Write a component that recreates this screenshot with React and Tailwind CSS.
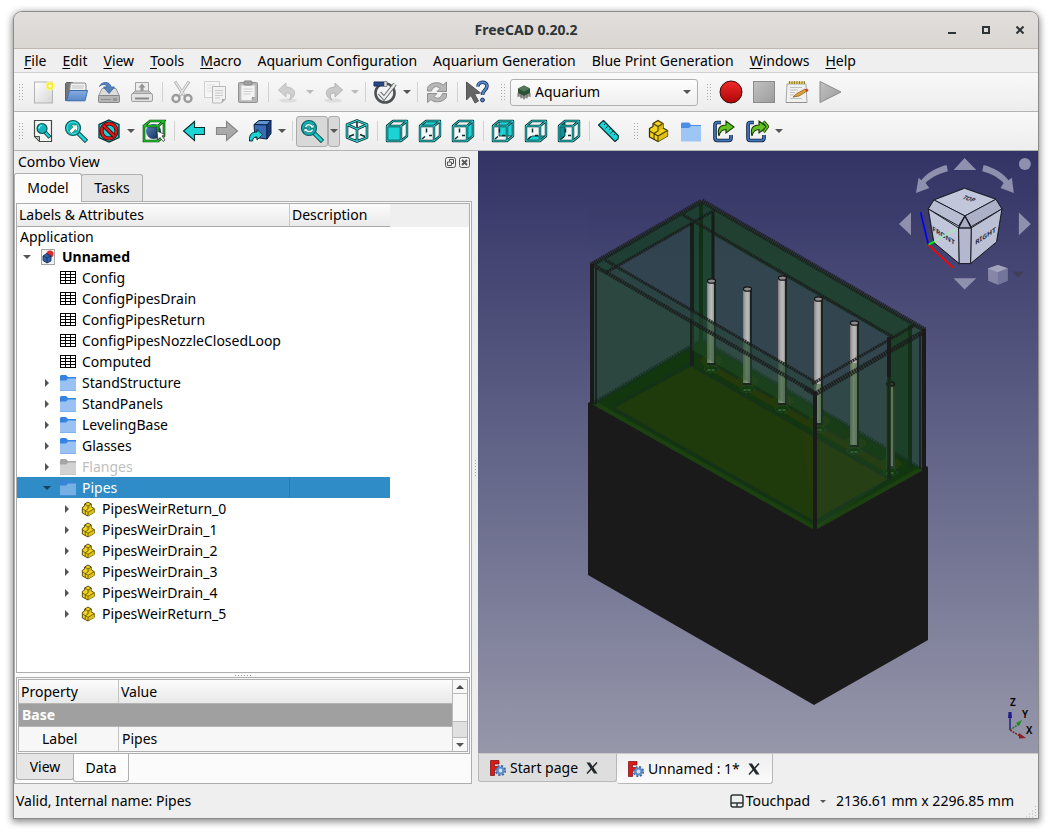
import React from "react";

const INK = "#04302f";
const TEAL = "#1cd3d6";

function Svg({ children, size = "size-6", box = "0 0 24 24", className = "" }) {
  return (
    <svg viewBox={box} className={`${size} shrink-0 ${className}`} fill="none" aria-hidden="true">
      {children}
    </svg>
  );
}

/* ---------- toolbar icons ---------- */

const NewDoc = () => (
  <Svg>
    <rect x="3.5" y="2" width="18" height="21" fill="url(#paper)" stroke="#b4b4b4" />
    <circle cx="19" cy="6" r="5" fill="#fbf6a0" opacity="0.8" />
    <circle cx="19" cy="6" r="3.4" fill="#f7ee2b" />
    <circle cx="19" cy="6" r="1.6" fill="#fffde0" />
  </Svg>
);

const OpenDoc = () => (
  <Svg>
    <path d="M1.500 20.500V3.500l1-1h6l1.500 2h2v15z" fill="#777" stroke="#5e5e5e" />
    <path d="M5 14 6.500 3h14.500l1 1v9z" fill="#f1f1f1" stroke="#888" />
    <path d="M8 6h12M7.500 8h12" stroke="#c4c4c4" />
    <path d="M2.500 20.800 5.500 10.500h18L21 20.800z" fill="url(#blueFolder)" stroke="#3a6cae" />
  </Svg>
);

const SaveDoc = () => (
  <Svg>
    <path d="M1.500 16 5 8.500h14l3.500 7.500z" fill="#dcdcdc" stroke="#999" />
    <rect x="1.500" y="15.500" width="21" height="7" rx="1" fill="#b5b5b5" stroke="#878787" />
    <path d="M4 19.500h10" stroke="#8e8e8e" />
    <path d="M17 18v3M19 18v3" stroke="#777" />
    <path d="M2.500 6.500C4 1.500 13 .5 14 7h3.500L12 13.500 6.500 7H10C9.500 4 5.500 3.500 2.500 6.500z" fill="#5382bd" stroke="#36609b" strokeWidth="0.800" />
  </Svg>
);

const Print = () => (
  <Svg>
    <path d="M5.500 13V2.500h13V13z" fill="#ececec" stroke="#a2a2a2" />
    <path d="M12 3.500 8.500 7.500h2V11h3V7.500h2z" fill="#949494" />
    <path d="M2 14 5 11h14l3 3z" fill="#c5c5c5" stroke="#9c9c9c" />
    <rect x="1.500" y="13.500" width="21" height="8" rx="1.500" fill="#e3e3e3" stroke="#a0a0a0" />
    <path d="M5 18.500h14" stroke="#888" strokeWidth="2" />
  </Svg>
);

const Cut = () => (
  <Svg>
    <path d="M5 1.500 14.500 16M19 1.500 9.500 16" stroke="#b5b5b5" strokeWidth="3" />
    <path d="M5.500 2 14 15M18.500 2 10 15" stroke="#ececec" strokeWidth="1.200" />
    <circle cx="6" cy="18.500" r="3.500" stroke="#9b9b9b" strokeWidth="2.400" />
    <circle cx="18" cy="18.500" r="3.500" stroke="#9b9b9b" strokeWidth="2.400" />
  </Svg>
);

const Copy = () => (
  <Svg>
    <path d="M1.500 1.500h15v16h-15z" fill="#f6f6f6" stroke="#cfcfcf" />
    <path d="M4 5h8M4 8h6M4 11h5" stroke="#ddd" />
    <path d="M9.500 6.500h13V19l-4 4h-9z" fill="#f1f1f1" stroke="#b8b8b8" />
    <path d="M12 10.500h8M12 13h8M12 15.500h8M12 18h5" stroke="#ccc" />
    <path d="m18.500 23 .5-4 3.500 0z" fill="#aaa" />
  </Svg>
);

const Paste = () => (
  <Svg>
    <rect x="2.500" y="2.500" width="19" height="20" rx="1" fill="#b6b6b6" stroke="#929292" />
    <path d="M5 5h14v12l-3.500 3.500H5z" fill="#f3f3f3" stroke="#c7c7c7" />
    <path d="M7.500 9h9M7.500 11.500h9M7.500 14h7" stroke="#cfcfcf" />
    <rect x="8" y="1" width="8" height="4" rx="1" fill="#a3a3a3" stroke="#838383" />
    <path d="m15.500 20.500.5-3.500h3z" fill="#999" />
  </Svg>
);

const Undo = () => (
  <Svg>
    <ellipse cx="12" cy="20.500" rx="9" ry="2" fill="#dedede" />
    <path d="M10 3 2.500 10l7.500 7v-4c5-.5 6 3 3 7 7-3 9-12-3-13z" fill="#cfcfcf" stroke="#bdbdbd" />
  </Svg>
);

const Redo = () => (
  <Svg>
    <ellipse cx="12" cy="20.500" rx="9" ry="2" fill="#dedede" />
    <path d="m14 3 7.500 7-7.500 7v-4c-5-.5-6 3-3 7-7-3-9-12 3-13z" fill="#c9c9c9" stroke="#b2b2b2" />
  </Svg>
);

const Validate = () => (
  <Svg>
    <circle cx="12" cy="13" r="9.500" fill="#f4f4f4" stroke="#4e5153" strokeWidth="2.600" />
    <path d="m6.500 13 4.500 5L22 4" stroke="#6a6d6f" strokeWidth="4.200" />
    <path d="m6.500 13 4.500 5L22 4" stroke="#ececec" strokeWidth="2.200" />
    <path d="M1 2h10v4H1z" fill="#274a86" stroke="#142c58" />
    <path d="M11 1.500h3v5h-3z" fill="#ddd" stroke="#555" strokeWidth="0.600" />
  </Svg>
);

const Refresh = () => (
  <Svg>
    <path d="M2.500 11V8.500C3 3 14 .5 18 5l3.500-3v9.500h-9.500l3-3C12 5.500 8 6 6.500 11z" fill="#b7b7b7" stroke="#8f8f8f" />
    <path d="M21.500 13.500V16c-.5 5.500-11.500 8-15.500 3.500L2.500 22.500V13.500H12l-3 3c3 3 7 2 8.500-3z" fill="#b7b7b7" stroke="#8f8f8f" />
  </Svg>
);

const WhatsThis = () => (
  <Svg>
    <path d="M1.500 2v18l4.500-4.500 4 7.500 3.500-2-4-7 6-1z" fill="#646464" stroke="#565656" />
    <path d="M13 6.500c0-5.500 9-5.500 9-.5 0 4-4.500 4-4.500 9" stroke="#17305e" strokeWidth="3.600" />
    <path d="M13 6.500c0-5.500 9-5.500 9-.5 0 4-4.500 4-4.500 9" stroke="#5787c8" strokeWidth="2" />
    <circle cx="17.500" cy="20" r="1.900" fill="#5787c8" stroke="#17305e" />
  </Svg>
);

const Record = () => (
  <Svg>
    <circle cx="12" cy="12" r="11" fill="url(#red)" stroke="#3b0a0a" />
  </Svg>
);

const Stop = () => (
  <Svg>
    <rect x="1.500" y="1.500" width="21" height="21" fill="url(#gray)" stroke="#8b8b8b" />
  </Svg>
);

const MacroEdit = () => (
  <Svg>
    <path d="M2 4h19l1 18.500H1z" fill="#f0f0f0" stroke="#a7a7a7" />
    <path d="M3.500 1.500h16.500v2.500H3.500z" fill="#d8c468" />
    <path d="M4.500 1v3M7 1v3M9.500 1v3M12 1v3M14.500 1v3M17 1v3M19.500 1v3" stroke="#8c7a2c" strokeWidth="0.900" />
    <path d="M5 7.500h12M5 10h8M5 12.500h5M5 15h4M5 18.500h12" stroke="#c1c1c1" />
    <path d="m8 17 4-3.500L20 9l2 2-8 5z" fill="#e0a33a" stroke="#8b5a14" strokeWidth="0.800" />
    <path d="m20 9.500 2-1 1.500 2-1.500 1.500z" fill="#d33" />
    <path d="M1 22.500h21" stroke="#909090" />
  </Svg>
);

const Play = () => (
  <Svg>
    <path d="M2 1.500 23 12 2 22.500z" fill="url(#gray)" stroke="#8b8b8b" />
  </Svg>
);

const FitAll = () => (
  <Svg>
    <path d="M3.500 1.500h17v21h-12l-5-5z" fill="#f5f6f4" stroke="#444b44" strokeWidth="1.200" />
    <path d="M3.500 17.500h5v5z" fill="#b9bdb7" stroke="#444b44" />
    <path d="m14 13 5 5.500" stroke={INK} strokeWidth="4" />
    <path d="m14 13 4.500 5" stroke={TEAL} strokeWidth="2.400" />
    <circle cx="11" cy="9.500" r="5" fill="#12b6bb" stroke="#0b5a5c" strokeWidth="1.200" />
    <path d="M8 9.500a3 3 0 0 1 3-3" stroke="#8ff" strokeWidth="1.200" />
  </Svg>
);

const FitSelection = () => (
  <Svg>
    <path d="m14 14 8.500 8.500" stroke={INK} strokeWidth="4.500" />
    <path d="m14 14 8 8" stroke={TEAL} strokeWidth="2.800" />
    <circle cx="9" cy="9" r="7.500" fill="#10b3b8" stroke="#0b5a5c" strokeWidth="1.200" />
    <circle cx="9" cy="9" r="6" stroke="#4de4e6" />
    <path d="m5 12 4-4-2-2h6.500v6.500l-2-2-4 4z" fill="#fff" stroke="#173" strokeWidth="0.600" />
  </Svg>
);

const DrawStyle = () => (
  <Svg>
    <path d="M12 1 22 5.500v13L12 23 2 18.500v-13z" fill={TEAL} stroke={INK} strokeWidth="1.300" />
    <circle cx="12" cy="12" r="7.500" stroke="#3c0505" strokeWidth="4" />
    <circle cx="12" cy="12" r="7.500" stroke="#e01b1b" strokeWidth="2.400" />
    <path d="m6.500 6.500 11 11" stroke="#3c0505" strokeWidth="4" />
    <path d="m6.500 6.500 11 11" stroke="#e01b1b" strokeWidth="2.400" />
  </Svg>
);

const BBox = () => (
  <Svg>
    <circle cx="11.500" cy="12.500" r="7.500" fill="url(#sphere)" />
    <path d="M2 7h14v15H2zM2 7l6-5h14l-6 5M22 2v15l-6 5" stroke="#063906" strokeWidth="2.600" />
    <path d="M2 7h14v15H2zM2 7l6-5h14l-6 5M22 2v15l-6 5" stroke="#1fc32c" strokeWidth="1.300" />
    <path d="m15 12 8 3.500-3 1.500 3 4-2 1.500-3-4-2 2.500z" fill="#fff" stroke="#333" strokeWidth="0.800" />
  </Svg>
);

const ArrowLeft = () => (
  <Svg>
    <path d="M12.500 2.500 1.500 12l11 9.500v-6h10v-7h-10z" fill={TEAL} stroke={INK} strokeWidth="1.100" />
  </Svg>
);
const ArrowRight = () => (
  <Svg>
    <path d="m11.500 2.500 11 9.500-11 9.500v-6h-10v-7h10z" fill="#aaa" stroke="#858585" strokeWidth="1.100" />
  </Svg>
);

const LinkGoto = () => (
  <Svg>
    <path d="m6 5.500 5-4h12l-4 4.500z" fill="#5f92d2" stroke="#0d2145" />
    <path d="M6 5.500 19 6v14L7 18.500z" fill="#3a6cb6" stroke="#0d2145" />
    <path d="m19 6 4-4.500v13l-4 5.500z" fill="#1a3d7a" stroke="#0d2145" />
    <path d="M1.500 22C1 15 4 13 9 13v-2.500l5.500 5L9 21v-3c-3 0-4 1-4.500 4z" fill={TEAL} stroke={INK} />
  </Svg>
);

const ZoomSync = () => (
  <Svg>
    <path d="m14 14 8.500 8.500" stroke={INK} strokeWidth="4.500" />
    <path d="m14 14 8 8" stroke={TEAL} strokeWidth="2.800" />
    <circle cx="9" cy="9" r="7.500" fill="#10b3b8" stroke="#0b5a5c" strokeWidth="1.200" />
    <path d="M4.500 8.500c0-4 6-5 8-2l1.500-1.500v4H10l1-1c-2-2-4-1-4.500.5zM13.500 10c0 4-6 5-8 2L4 13.500v-4h4l-1 1c2 2 4 1 4.500-.5z" fill="#dff" stroke={INK} strokeWidth="0.500" />
  </Svg>
);

const ISO_EDGES = "M12 1.500 22 5.500v13l-10 4-10-4v-13zM2 5.500l10 4.500 10-4.500M12 10v12.500";
const Iso = () => (
  <Svg>
    <path d="M12 1.500 22 5.500v13l-10 4-10-4v-13z" fill="#f3f6f6" />
    <path d="M12 3v5M4 17.500l5-2M20 17.500l-5-2" stroke={INK} strokeWidth="1.600" />
    <path d={ISO_EDGES} stroke={INK} strokeWidth="2.600" strokeLinejoin="round" />
    <path d={ISO_EDGES} stroke="#35dcde" strokeWidth="1.100" strokeLinejoin="round" />
  </Svg>
);

const FACE = {
  front: "M2 7h14v15H2z",
  top: "M2 7 8 2h14l-6 5z",
  right: "M16 7l6-5v15l-6 5z",
  rear: "M8 2h14v15H8z",
  bottom: "M2 22 8 17h14l-6 5z",
  left: "M2 7l6-5v15l-6 5z",
};
const CUBE = "M2 7h14v15H2zM2 7l6-5h14l-6 5M22 2v15l-6 5";

const ViewCube = ({ face }) => (
  <Svg>
    <path d="M2 7 8 2h14v15l-6 5H2z" fill="#f3f6f6" />
    <path d={FACE[face]} fill={face === "left" ? "#128e92" : TEAL} stroke={INK} strokeWidth="0.800" />
    {face !== "front" && <path d="M8.500 9.500v4M11 16.500h3M4 20l3-2.500" stroke={INK} strokeWidth="1.500" />}
    <path d={CUBE} stroke={INK} strokeWidth="2.400" strokeLinejoin="round" />
    <path d={CUBE} stroke="#35dcde" strokeWidth="1" strokeLinejoin="round" />
  </Svg>
);

const Ruler = () => (
  <Svg>
    <path d="M1.500 6 6.500 1.500l15 15.500-.5 3-3 2.500z" fill={TEAL} stroke={INK} strokeWidth="1.100" strokeLinejoin="round" />
    <path d="m9 4-2 2M11.500 6.500l-3 3M14 9l-2 2M16.500 11.500l-3 3M19 14l-2 2" stroke={INK} />
  </Svg>
);

const PartIcon = ({ size }) => (
  <Svg size={size}>
    <path d="M3.500 9.500 7 7.500V4.500l5-3 5 3v4.500l4.500 2.500V17L12 22.500 3.500 18z" fill="#f2d21c" stroke="#3a3303" strokeWidth="1.300" strokeLinejoin="round" />
    <path d="m12 7.500 5-3v4.500l-5 3.500z" fill="#d9ba14" />
    <path d="m12 17 9.500-5.500V17L12 22.500z" fill="#dfc017" />
    <path d="m7 4.500 5 3 5-3M12 7.500v4.500l-4 2.500L3.500 12M8 14.500l4 2.500 9.500-5.500M12 17v5.500M8 14.500V20" stroke="#4a4204" strokeWidth="1.100" />
  </Svg>
);

const GroupIcon = () => (
  <Svg>
    <path d="M2 22.500V4.500l1-1h7l2 2.500h10v4H2z" fill="#4a8ee6" />
    <path d="M2 22.500V9h8l2-2h10v15.500z" fill="#9ec6f4" />
  </Svg>
);

const LinkMake = ({ many }) => (
  <Svg>
    <path d="M9 3.500H5.500Q3 3.500 3 6v13q0 2.500 2.500 2.500h11q2.500 0 2.500-2.500V16" stroke="#0b1f40" strokeWidth="3.600" />
    <path d="M9 3.500H5.500Q3 3.500 3 6v13q0 2.500 2.500 2.500h11q2.500 0 2.500-2.500V16" stroke="#4374b8" strokeWidth="1.800" />
    <path d="M7 17C5 10 7.500 6 14 6V2l8 6-8 6V10.500C10 10.500 8 12 7 17z" fill="#62c221" stroke="#173a06" strokeWidth="1.100" />
    {many && <path d="m18.500 2.500 4 5-4 5.500" stroke="#173a06" strokeWidth="3.200" />}
    {many && <path d="m18.500 2.500 4 5-4 5.500" stroke="#62c221" strokeWidth="1.600" />}
  </Svg>
);

/* ---------- small icons ---------- */

const CaretDown = ({ color = "#555" }) => (
  <Svg size="h-1 w-2" box="0 0 8 4">
    <path d="M0 0h8L4 4z" fill={color} />
  </Svg>
);
const CaretUp = () => (
  <Svg size="h-1 w-2" box="0 0 8 4">
    <path d="M0 4h8L4 0z" fill="#4b4b4b" />
  </Svg>
);
const CaretRight = () => (
  <Svg size="h-2 w-1" box="0 0 4 8">
    <path d="M0 0v8l4-4z" fill="#555" />
  </Svg>
);

const SheetIcon = () => (
  <Svg size="size-4" box="0 0 16 16">
    <path d="M.5 1.500h15v12H.5zM.5 4.500h15M.5 7.500h15M.5 10.500h15M5.500 1.500v12M10.500 1.500v12" stroke="#000" shapeRendering="crispEdges" />
  </Svg>
);

const FolderIcon = ({ tone = "blue" }) => {
  const dark = tone === "gray" ? "#a6a6a6" : tone === "selected" ? "#3584d8" : "#3584e4";
  const light = tone === "gray" ? "#d2d2d2" : tone === "selected" ? "#74b0e4" : "#99c1f1";
  return (
    <Svg size="size-4" box="0 0 16 16">
      <path d="M0 15V1L1 0h5l2 2h8V15z" fill={dark} />
      <path d="M0 15.500V5.500h6l2-2h8v12z" fill={light} />
      <path d="M0 15.500h16" stroke={dark} strokeOpacity="0.500" />
    </Svg>
  );
};

const DocIcon = () => (
  <Svg size="size-4" box="0 0 16 16">
    <rect x="1.500" y="0.500" width="13" height="15" fill="#f2f2f2" stroke="#a5a5a5" />
    <circle cx="10" cy="5" r="3.500" fill="#e02a2a" />
    <path d="m3 7 3.500-2.500L11 7v5l-4 2-4-2.500z" fill="#2f5fa8" stroke="#132a52" strokeWidth="0.800" />
    <path d="m3 7 4 2 4-2M7 9v5" stroke="#132a52" strokeWidth="0.700" />
  </Svg>
);

const FreeCadIcon = () => (
  <Svg size="size-4" box="0 0 16 16">
    <path d="M.5.500h8.500v3.500H4.500v2.500h3V10h-3v5.500h-4z" fill="#dd1a1a" stroke="#6e0a0a" strokeWidth="0.700" />
    <circle cx="10.500" cy="10.500" r="4.500" stroke="#3a629c" strokeWidth="2.200" strokeDasharray="2 1.530" />
    <circle cx="10.500" cy="10.500" r="3" fill="#cfe0f5" stroke="#5f8cc8" strokeWidth="2.200" />
  </Svg>
);

const CloseX = () => (
  <Svg size="size-3" box="0 0 12 12">
    <path d="M.5.500h3.500l7.500 11H8z" fill="#22272a" />
    <path d="M11 .5 1 11.500" stroke="#22272a" strokeWidth="1.500" />
  </Svg>
);

const AquariumIcon = () => (
  <Svg size="size-4" box="0 0 16 16">
    <path d="m2 4.500 6-3 6 3v5l-6 3-6-3z" fill="#2c5136" />
    <path d="m2 4.500 6 3 6-3-6-3z" fill="#55795c" />
    <path d="m2 9 6 3 6-3v3l-6 3-6-3z" fill="#9a9c9a" />
    <path d="M2 9v4M5 10.500v4M8 12v3.500M11 10.500v4M14 9v4" stroke="#555" strokeWidth="0.800" />
  </Svg>
);

/* ---------- toolbar pieces ---------- */

const Handle = ({ className = "" }) => (
  <span className={`flex shrink-0 items-center ${className}`} aria-hidden="true">
    <svg viewBox="0 0 4 16" className="h-4 w-1">
      <path d="M.5 0v16M3.500 0v16" stroke="#aaa" strokeDasharray="1 2" shapeRendering="crispEdges" />
    </svg>
  </span>
);
const Sep = () => <span className="ml-1 mr-[2px] h-5 w-px shrink-0 bg-[#d2d2d2]" aria-hidden="true" />;

const Tool = ({ label, icon }) => (
  <button type="button" aria-label={label} className="flex h-8 w-[33px] shrink-0 items-center justify-center">
    {icon}
  </button>
);
const Drop = ({ label, color }) => (
  <button type="button" aria-label={label} className="flex h-8 w-3 shrink-0 items-center justify-center">
    <CaretDown color={color} />
  </button>
);

const Toolbar = ({ children, label }) => (
  <div role="toolbar" aria-label={label} className="flex h-[39px] shrink-0 items-center border-b border-[#b4b4b4] bg-linear-to-b from-[#f9f9f9] to-[#ededed]">
    {children}
  </div>
);

const MENUS = [
  ["F", "ile"], ["E", "dit"], ["V", "iew"], ["T", "ools"], ["M", "acro"],
  ["", "Aquarium Configuration"], ["", "Aquarium Generation"], ["", "Blue Print Generation"],
  ["W", "indows"], ["H", "elp"],
];

/* ---------- model tree ---------- */

const TREE = [
  { level: 1, label: "Config", icon: "sheet" },
  { level: 1, label: "ConfigPipesDrain", icon: "sheet" },
  { level: 1, label: "ConfigPipesReturn", icon: "sheet" },
  { level: 1, label: "ConfigPipesNozzleClosedLoop", icon: "sheet" },
  { level: 1, label: "Computed", icon: "sheet" },
  { level: 1, label: "StandStructure", icon: "folder", closed: true },
  { level: 1, label: "StandPanels", icon: "folder", closed: true },
  { level: 1, label: "LevelingBase", icon: "folder", closed: true },
  { level: 1, label: "Glasses", icon: "folder", closed: true },
  { level: 1, label: "Flanges", icon: "folder", closed: true, hidden: true },
  { level: 1, label: "Pipes", icon: "folder", open: true, selected: true },
  { level: 2, label: "PipesWeirReturn_0", icon: "part", closed: true },
  { level: 2, label: "PipesWeirDrain_1", icon: "part", closed: true },
  { level: 2, label: "PipesWeirDrain_2", icon: "part", closed: true },
  { level: 2, label: "PipesWeirDrain_3", icon: "part", closed: true },
  { level: 2, label: "PipesWeirDrain_4", icon: "part", closed: true },
  { level: 2, label: "PipesWeirReturn_5", icon: "part", closed: true },
];
const INDENT = ["pl-0", "pl-5", "pl-10"];

function TreeRow({ row }) {
  const text = row.selected ? "text-white" : row.hidden ? "text-[#bebebe]" : "text-black";
  const tone = row.selected ? "selected" : row.hidden ? "gray" : "blue";
  return (
    <tr aria-level={row.level + 1} aria-selected={!!row.selected} className={`h-[21px] ${text} ${row.selected ? "bg-[#308cc6]" : ""}`}>
      <td className={`p-0 ${row.selected ? "border-r border-[#2a7cb0]" : ""}`}>
        <div className={`flex h-[21px] items-center ${INDENT[row.level]}`}>
          <span className="mr-[3px] flex w-5 shrink-0 items-center justify-center">
            {row.closed && <CaretRight />}
            {row.open && <CaretDown color="#173f5a" />}
          </span>
          {row.icon === "sheet" && <SheetIcon />}
          {row.icon === "folder" && <FolderIcon tone={tone} />}
          {row.icon === "part" && <PartIcon size="size-4" />}
          <span className="ml-[6px] whitespace-nowrap">{row.label}</span>
        </div>
      </td>
      <td className="p-0" />
    </tr>
  );
}

function ModelTree() {
  return (
    <div className="min-h-0 flex-1 overflow-hidden border border-[#aeaeae] bg-white">
      <div className="bg-[#efefef]">
        <table role="treegrid" aria-label="Model" className="w-[373px] table-fixed border-separate border-spacing-0 bg-white">
          <colgroup>
            <col className="w-[273px]" />
            <col />
          </colgroup>
          <thead>
            <tr className="h-[23px] bg-linear-to-b from-[#fcfcfc] to-[#e9e9e9]">
              <th className="border-b border-r border-b-[#a8a8a8] border-r-[#c8c8c8] p-0 pl-[2px] text-left font-normal">Labels &amp; Attributes</th>
              <th className="border-b border-[#a8a8a8] p-0 pl-[2px] text-left font-normal">Description</th>
            </tr>
          </thead>
        </table>
      </div>
      <table role="treegrid" aria-label="Document objects" className="w-[373px] table-fixed border-separate border-spacing-0">
        <colgroup>
          <col className="w-[273px]" />
          <col />
        </colgroup>
        <tbody>
          <tr className="h-5"><td className="p-0 pl-[3px]" colSpan={2}>Application</td></tr>
          <tr className="h-5" aria-level={1}>
            <td className="p-0" colSpan={2}>
              <div className="flex h-5 items-center">
                <span className="mr-[3px] flex w-5 items-center justify-center"><CaretDown /></span>
                <DocIcon />
                <span className="ml-[6px] font-bold">Unnamed</span>
              </div>
            </td>
          </tr>
          {TREE.map((row) => <TreeRow key={row.label} row={row} />)}
        </tbody>
      </table>
    </div>
  );
}

function PropertyEditor() {
  return (
    <div className="shrink-0 border border-[#aeaeae] bg-[#f7f7f7] p-px">
      <div className="flex h-[73px] border border-[#aeaeae]">
        <table className="min-w-0 flex-1 table-fixed border-separate border-spacing-0">
          <colgroup>
            <col className="w-[100px]" />
            <col />
          </colgroup>
          <thead>
            <tr className="h-[23px] bg-linear-to-b from-[#fcfcfc] to-[#e9e9e9] text-left">
              <th className="border-r border-[#c4c4c4] p-0 pl-[2px] font-normal">Property</th>
              <th className="p-0 pl-[2px] font-normal">Value</th>
            </tr>
          </thead>
          <tbody>
            <tr className="h-6 bg-[#a0a0a0] text-white">
              <th colSpan={2} className="border-y border-[#b4b4b4] p-0 pl-[3px] text-left font-bold">Base</th>
            </tr>
            <tr className="h-6 bg-[#f7f7f7]">
              <td className="border-r border-[#c4c4c4] p-0 pl-[23px]">Label</td>
              <td className="p-0 pl-[3px]">Pipes</td>
            </tr>
          </tbody>
        </table>
        <div role="scrollbar" aria-label="Properties" aria-controls="view3d" aria-valuenow={0} className="flex w-[15px] flex-col border-l border-[#bbb] bg-[#e0e0e0]">
          <button type="button" aria-label="Scroll up" className="flex h-[14px] items-center justify-center border-b border-[#bbb] bg-[#f8f8f8]"><CaretUp /></button>
          <div className="h-7 border-b border-[#bbb] bg-[#f8f8f8]" />
          <div className="flex-1" />
          <button type="button" aria-label="Scroll down" className="flex h-[14px] items-center justify-center border-t border-[#bbb] bg-[#f8f8f8]"><CaretDown /></button>
        </div>
      </div>
    </div>
  );
}

function ComboView() {
  return (
    <aside className="flex w-[458px] shrink-0 flex-col">
      <div className="flex h-[22px] shrink-0 items-center pl-1 pr-[2px]">
        <h2 className="flex-1">Combo View</h2>
        <button type="button" aria-label="Float" className="mr-[3px]">
          <Svg size="size-[11px]" box="0 0 11 11">
            <rect x="0.500" y="0.500" width="10" height="10" rx="2" stroke="#555" />
            <path d="M2.500 5h4v3.500h-4zM4.500 4.500v-2h4v4h-2" stroke="#555" />
          </Svg>
        </button>
        <button type="button" aria-label="Close">
          <Svg size="size-[11px]" box="0 0 11 11">
            <rect x="0.500" y="0.500" width="10" height="10" rx="2" stroke="#555" />
            <path d="m3 3 5 5M8 3 3 8" stroke="#555" strokeWidth="1.800" />
          </Svg>
        </button>
      </div>
      <div role="tablist" aria-label="Combo View" className="flex h-7 shrink-0 items-end">
        <button type="button" role="tab" aria-selected="true" className="z-10 -mb-px h-[29px] w-[68px] rounded-t-[3px] border border-b-0 border-[#b0b0b0] bg-[#fcfcfc]">Model</button>
        <button type="button" role="tab" aria-selected="false" className="-ml-px h-[27px] w-[62px] rounded-t-[3px] border border-b-0 border-[#b0b0b0] bg-[#e6e6e6]">Tasks</button>
      </div>
      <div className="flex min-h-0 flex-1 flex-col border border-[#aeaeae] bg-[#fbfbfb] p-px">
        <ModelTree />
        <div className="flex h-1 shrink-0 items-center justify-center" aria-hidden="true">
          <svg viewBox="0 0 16 1" className="h-px w-4"><path d="M0 .5h16" stroke="#999" strokeDasharray="1 2" /></svg>
        </div>
        <PropertyEditor />
        <div role="tablist" aria-label="Properties" className="flex h-[28px] shrink-0 items-start">
          <button type="button" role="tab" aria-selected="false" className="h-[26px] w-[58px] rounded-b-[3px] border border-t-0 border-[#b0b0b0] bg-[#e6e6e6]">View</button>
          <button type="button" role="tab" aria-selected="true" className="-ml-px h-7 w-14 rounded-b-[3px] border border-t-0 border-[#b0b0b0] bg-[#fdfdfd]">Data</button>
        </div>
      </div>
    </aside>
  );
}

/* ---------- 3D viewport ---------- */

const PIPES = [
  { x: 707, top: 281, mid: 322, base: 365 },
  { x: 743, top: 289, mid: 342, base: 385 },
  { x: 778, top: 278, mid: 362, base: 405 },
  { x: 814, top: 299, mid: 384, base: 425 },
  { x: 850, top: 323, mid: 363, base: 447 },
  { x: 886, top: 384, mid: 384, base: 468 },
];

function Pipe({ x, top, mid, base }) {
  const thin = top === mid;
  return (
    <g>
      <ellipse cx={x + 4.500} cy={base - 4} rx="10.500" ry="5.500" fill="#1d3d0e" stroke="#3a3a0c" strokeDasharray="2 2" />
      <ellipse cx={x + 4.500} cy={base + 4} rx="7" ry="3.500" fill="#14380f" stroke="#24492a" strokeDasharray="3 1" />
      <path d={`M${x + 0.500} ${base + 5}h8`} stroke="#4f8a55" strokeDasharray="3 1" />
      <path d={`M${x} ${top}v${base - top}h9V${top}z`} fill={thin ? "#28422c" : "#1c241e"} />
      {!thin && <path d={`M${x} ${top}v${mid - top}h7V${top}z`} fill="url(#pipe)" />}
      <path d={`M${x + (thin ? 4 : 0)} ${mid}v${base - mid - 2}h${thin ? 3 : 7}V${mid}z`} fill={thin ? "#5d7758" : "url(#pipeWet)"} />
      <ellipse cx={x + 4.500} cy={top} rx="4" ry="2.200" fill={thin ? "#27402c" : "#8c8c8c"} stroke="#151515" strokeWidth="1.300" />
    </g>
  );
}

function Tank() {
  return (
    <g>
      <path d="M588 403 701 338 928 467V640L814 705 588 575z" fill="#1a1a1a" />
      <path d="M591 264 702 200 925 329 923 470 815 530 592 404z" fill="#2c4740" />
      <path d="M713 212 889 337v123L692 350V224z" fill="#33464f" />
      <path d="M692 224v98L607 271z" fill="#32444f" />
      <path d="M702 202 922 329 889 337 692 223 683 215z" fill="#214132" />
      <path d="M692 224 702 205l11 8v130l-21 23z" fill="#1f4434" />
      <path d="M592 264 702 201 713 211 605 273z" fill="#1f3f34" />
      <path d="M889 337 912 324v142l-23 13z" fill="#1d4029" />
      <path d="M912 326 921 331v137l-9 4z" fill="#2e4a47" />
      <path d="M592 404 702 340 923 470 815 530z" fill="#12370f" />
      <path d="M614 408 692 366 889 479 814 521z" fill="#1f3a0b" />
      <path d="M800 428 889 479 814 521z" fill="#243a0b" />
      <path d="m714 364 178 102-6 6L708 369z" fill="#25390b" />

      <g stroke="#163021" strokeWidth="4" opacity="0.850" strokeDasharray="2 1">
        <path d="M592 404 702 340 923 470" />
        <path d="M692 366 889 479M612 407 692 363M612 407 815 523M815 521 893 477" strokeWidth="2.500" />
        <path d="M692 352 905 474" strokeWidth="2.500" />
      </g>
      <path d="M596 404 815 528 921 469" stroke="#1c400f" strokeWidth="4" />

      <g>
        <path d="M692 223v143" stroke="#18201c" strokeWidth="4" />
        <path d="M701 204v138" stroke="#123016" strokeWidth="4" />
        <path d="M713 212v70" stroke="#171d1b" strokeWidth="3" />
        <path d="M910 325v143" stroke="#123016" strokeWidth="4" />
      </g>

      {PIPES.map((p) => <Pipe key={p.x} {...p} />)}

      <path d="M591 264 605 259 817 384 815 393z" fill="#24463a" opacity="0.550" />
      <path d="M692 322 815 393V420L692 350z" fill="#2c5236" opacity="0.350" />
      <path d="M815 393V530L889 478V350z" fill="#2c5236" opacity="0.220" />

      <g stroke="#1a1a1a" opacity="0.850">
        <path d="M591 265 702 201" strokeWidth="5" strokeDasharray="1.500 0.600" />
        <path d="M702 201 925 330" strokeWidth="5" strokeDasharray="1.500 0.600" />
        <path d="M605 273 715 210" strokeWidth="3" strokeDasharray="2 0.600" />
        <path d="M683 215 893 337" strokeWidth="3" strokeDasharray="2 0.600" />
        <path d="M605 260 817 383" strokeWidth="3" strokeDasharray="2 0.600" />
        <path d="M593 265 815 393" strokeWidth="4" strokeDasharray="2 0.600" />
        <path d="M812 384 915 325" strokeWidth="3" strokeDasharray="2 0.600" />
        <path d="M805 388 815 394 925 331" strokeWidth="5" strokeDasharray="2 0.600" />
      </g>
      <path d="M592 264V404M924 329V470" stroke="#1a1a1a" strokeWidth="4" />
      <path d="M596 268V404M920 332V469" stroke="#1a1a1a" strokeWidth="1.500" />
      <path d="M889 337v40M815 392V530" stroke="#1a1a1a" strokeWidth="4" />
      <path d="M889 377V479" stroke="#172a1a" strokeWidth="3.500" />
    </g>
  );
}

function NavCube() {
  return (
    <g transform="translate(880 145) scale(0.333)">
      <g fill="#8f90ae">
        <path d="M254 39 289 75H221zM254 434 221 400h68zM57 237l36-34v68zM453 237l-36-34v68z" />
        <circle cx="435" cy="57" r="18" />
        <path d="M200 60 204 79C170 88 147 103 137 114L148 129 108 144 116 98 124 106C142 83 170 68 200 60z" />
        <path d="M311 60 307 79C341 88 361 103 371 114L362 129 402 144 396 98 386 106C368 83 341 68 311 60z" />
      </g>
      <path d="M324 371 354 360 383 370V408L354 420 325 408z" fill="#8687a7" />
      <path d="M324 371 354 382 383 370 354 360z" fill="#a2a3bd" />
      <path d="M354 382 383 370V408L354 420z" fill="#74759a" />
      <path d="M397 381h36l-18 18z" fill="#3f3f58" />

      <g fill="#c2c6da" stroke="#1b1c26" strokeWidth="3" strokeLinejoin="round">
        <path d="M254 130 348 163 366 192 350 291 272 356H238L162 293 145 192 162 165z" />
        <path d="M162 165 254 130 348 163 255 213z" />
        <path d="M162 165 255 213 236 243 145 192z" fill="#b9bdd2" />
        <path d="M348 163 366 192 274 245 255 213z" fill="#adb1c8" />
        <path d="M145 192 236 249 238 356 162 293z" />
        <path d="M274 249 366 192 350 291 272 356z" fill="#bcc0d5" />
        <path d="M236 249H274L272 356H238z" fill="#b4b8ce" />
        <path d="M255 213 274 249H236z" fill="#a9adc5" strokeWidth="4" />
      </g>
      <g fontFamily="Noto Sans" fontWeight="700" fill="#2d2f3d" textAnchor="middle">
        <text transform="translate(191 279) skewY(33)" fontSize="20">FRONT</text>
        <text transform="translate(317 280) skewY(-33)" fontSize="20">RIGHT</text>
        <text transform="translate(262 166) rotate(18) skewX(-30)" fontSize="18">TOP</text>
      </g>
      <path d="M122 202 145 298" stroke="#0000ff" strokeWidth="5" />
      <path d="M145 300 219 368" stroke="#ff0000" strokeWidth="5" />
      <path d="m163 290 66-38" stroke="#a5e6b4" strokeWidth="5" />
      <path d="m146 299 17-9" stroke="#00f000" strokeWidth="6" />
    </g>
  );
}

function Axes() {
  return (
    <g>
      <path d="M1010 730V717" stroke="#1f1f8c" strokeWidth="1.500" />
      <path d="M1008 718l.5-6h3l.5 6z" fill="#1f1f8c" />
      <path d="m1010 730 9-6" stroke="#1f7a1f" strokeWidth="1.500" strokeDasharray="2 1" />
      <path d="m1016 723 6-3-3 6z" fill="#1f8a1f" />
      <path d="m1010 730 10 6" stroke="#7a1f1f" strokeWidth="1.500" strokeDasharray="2 1" />
      <path d="m1019 733 7 5-7 .500z" fill="#8a1f1f" />
      <g fontFamily="Noto Sans" fontSize="10" fontWeight="600" fill="#000">
        <text x="1010" y="706">Z</text>
        <text x="1022" y="718">Y</text>
        <text x="1026" y="734">X</text>
      </g>
    </g>
  );
}

function Viewport() {
  return (
    <div id="view3d" className="min-h-0 flex-1 bg-linear-to-b from-[#333365] to-[#9797aa]">
      <svg viewBox="478 151 560 602" className="size-full" fill="none" role="img" aria-label="Aquarium model">
        <Tank />
        <NavCube />
        <Axes />
      </svg>
    </div>
  );
}

/* ---------- page ---------- */

function Defs() {
  const stops = (a, b) => [<stop key="a" stopColor={a} />, <stop key="b" offset="1" stopColor={b} />];
  return (
    <svg className="absolute size-0" aria-hidden="true">
      <defs>
        <linearGradient id="paper" x1="0" y1="0" x2="1" y2="1">{stops("#ffffff", "#d6d6d6")}</linearGradient>
        <linearGradient id="blueFolder" x1="0" y1="0" x2="0" y2="1">{stops("#86aede", "#5788c9")}</linearGradient>
        <linearGradient id="red" x1="0" y1="0" x2="0" y2="1">{stops("#f02a2a", "#ad0606")}</linearGradient>
        <linearGradient id="gray" x1="0" y1="0" x2="1" y2="1">{stops("#c2c2c2", "#9c9c9c")}</linearGradient>
        <linearGradient id="sphere" x1="0" y1="0" x2="1" y2="1">{stops("#5c86c6", "#0c2450")}</linearGradient>
        <linearGradient id="pipe" x1="0" y1="0" x2="1" y2="0">
          <stop stopColor="#7d7674" />
          <stop offset="0.250" stopColor="#a5a5a5" />
          <stop offset="0.700" stopColor="#bebebe" />
          <stop offset="1" stopColor="#8c8c8c" />
        </linearGradient>
        <linearGradient id="pipeWet" x1="0" y1="0" x2="1" y2="0">
          <stop stopColor="#5c6b55" />
          <stop offset="0.500" stopColor="#7c9478" />
          <stop offset="1" stopColor="#667d63" />
        </linearGradient>
      </defs>
    </svg>
  );
}

export default function App() {
  return (
    <div className="h-screen bg-white px-[14px] pb-4 pt-3 font-['Noto_Sans',sans-serif] text-[14px] leading-5 text-black">
      <Defs />
      <div className="flex h-full flex-col overflow-hidden rounded-t-lg bg-[#efefef] shadow-[0_0_0_1px_#8c8c8c,0_2px_7px_2px_rgba(0,0,0,0.45)]">
        <header className="grid h-[37px] shrink-0 grid-cols-[1fr_auto_1fr] items-center border-b border-[#bfb8b1] bg-linear-to-b from-[#e1dedb] to-[#dad6d2]">
          <span />
          <h1 className="font-bold text-[#2e3436]">FreeCAD 0.20.2</h1>
          <div className="flex justify-end gap-[10px] pr-[6px]">
            <button type="button" aria-label="Minimize" className="flex size-6 items-center justify-center">
              <Svg size="size-2" box="0 0 8 8"><path d="M0 7h8" stroke="#2e3436" strokeWidth="2" /></Svg>
            </button>
            <button type="button" aria-label="Maximize" className="flex size-6 items-center justify-center">
              <Svg size="size-2" box="0 0 8 8"><path d="M1 1h6v6H1z" stroke="#2e3436" strokeWidth="2" /></Svg>
            </button>
            <button type="button" aria-label="Close window" className="flex size-6 items-center justify-center">
              <Svg size="size-2" box="0 0 8 8"><path d="m.5.500 7 7M7.500.5l-7 7" stroke="#2e3436" strokeWidth="2" /></Svg>
            </button>
          </div>
        </header>

        <nav aria-label="Menu" className="flex h-6 shrink-0 items-center gap-4 border-b border-[#d0d0d0] bg-[#efefef] pl-[10px]">
          {MENUS.map(([key, rest]) => (
            <button type="button" key={rest} className="whitespace-nowrap">
              {key && <span className="underline underline-offset-2">{key}</span>}{rest}
            </button>
          ))}
        </nav>

        <Toolbar label="File and macros">
          <Handle className="w-3 pl-[5px]" />
          <Tool label="New" icon={<NewDoc />} />
          <Tool label="Open" icon={<OpenDoc />} />
          <Tool label="Save" icon={<SaveDoc />} />
          <Tool label="Print" icon={<Print />} />
          <Sep />
          <Tool label="Cut" icon={<Cut />} />
          <Tool label="Copy" icon={<Copy />} />
          <Tool label="Paste" icon={<Paste />} />
          <Sep />
          <Tool label="Undo" icon={<Undo />} />
          <Drop label="Undo history" color="#bbb" />
          <Tool label="Redo" icon={<Redo />} />
          <Drop label="Redo history" color="#bbb" />
          <Sep />
          <Tool label="Validate" icon={<Validate />} />
          <Drop label="Validate options" />
          <Sep />
          <Tool label="Refresh" icon={<Refresh />} />
          <Sep />
          <Tool label="What's this?" icon={<WhatsThis />} />
          <Handle className="w-[17px] pl-2" />
          <div className="relative flex h-[27px] w-[188px] shrink-0 items-center">
            <select aria-label="Workbench" className="h-full w-full appearance-none rounded-[3px] border border-[#b0b0b0] bg-linear-to-b from-[#fdfdfd] to-[#efefef] pl-6 text-black">
              <option>Aquarium</option>
            </select>
            <span className="pointer-events-none absolute left-[6px]"><AquariumIcon /></span>
            <span className="pointer-events-none absolute right-[7px] flex"><CaretDown /></span>
          </div>
          <Handle className="w-4 pl-[9px]" />
          <Tool label="Record macro" icon={<Record />} />
          <Tool label="Stop recording" icon={<Stop />} />
          <Tool label="Macros" icon={<MacroEdit />} />
          <Tool label="Execute macro" icon={<Play />} />
        </Toolbar>

        <Toolbar label="View and structure">
          <Handle className="w-3 pl-[5px]" />
          <Tool label="Fit all" icon={<FitAll />} />
          <Tool label="Fit selection" icon={<FitSelection />} />
          <Tool label="Draw style" icon={<DrawStyle />} />
          <Drop label="Draw style options" />
          <Tool label="Bounding box" icon={<BBox />} />
          <Sep />
          <Tool label="Back" icon={<ArrowLeft />} />
          <Tool label="Forward" icon={<ArrowRight />} />
          <Tool label="Go to linked object" icon={<LinkGoto />} />
          <Drop label="Link options" />
          <Sep />
          <button type="button" aria-label="Sync view" aria-pressed="true" className="ml-px flex h-[31px] w-8 shrink-0 items-center justify-center rounded-[3px] border border-[#ababab] bg-[#d8d8d8]">
            <ZoomSync />
          </button>
          <button type="button" aria-label="Sync view options" className="flex h-[31px] w-3 shrink-0 items-center justify-center rounded-[3px] border border-[#ababab] bg-[#d8d8d8]">
            <CaretDown />
          </button>
          <Tool label="Isometric" icon={<Iso />} />
          <Sep />
          <Tool label="Front" icon={<ViewCube face="front" />} />
          <Tool label="Top" icon={<ViewCube face="top" />} />
          <Tool label="Right" icon={<ViewCube face="right" />} />
          <Sep />
          <Tool label="Rear" icon={<ViewCube face="rear" />} />
          <Tool label="Bottom" icon={<ViewCube face="bottom" />} />
          <Tool label="Left" icon={<ViewCube face="left" />} />
          <Sep />
          <Tool label="Measure distance" icon={<Ruler />} />
          <Handle className="w-4 pl-[9px]" />
          <Tool label="Create part" icon={<PartIcon size="size-6" />} />
          <Tool label="Create group" icon={<GroupIcon />} />
          <Tool label="Make link" icon={<LinkMake />} />
          <Tool label="Link actions" icon={<LinkMake many />} />
          <Drop label="Link action options" />
        </Toolbar>

        <main className="flex min-h-0 flex-1">
          <ComboView />
          <div className="flex w-[6px] shrink-0 items-center justify-center" aria-hidden="true">
            <svg viewBox="0 0 1 16" className="h-4 w-px"><path d="M.5 0v16" stroke="#aaa" strokeDasharray="1 2" /></svg>
          </div>
          <section className="flex min-w-0 flex-1 flex-col">
            <Viewport />
            <div role="tablist" aria-label="Documents" className="flex h-[31px] shrink-0 items-start border-t border-[#c8c8c8]">
              <button type="button" role="tab" aria-selected="false" className="flex h-7 items-center gap-1 rounded-b-[3px] border border-t-0 border-[#b8b8b8] bg-[#dedede] pl-[11px] pr-[18px]">
                <FreeCadIcon />Start page<span className="ml-1"><CloseX /></span>
              </button>
              <button type="button" role="tab" aria-selected="true" className="flex h-[30px] items-center gap-1 rounded-b-[3px] border border-l-0 border-t-0 border-[#b8b8b8] bg-linear-to-b from-[#efefef] to-[#fbfbfb] pl-[11px] pr-3">
                <FreeCadIcon />Unnamed : 1*<span className="ml-1"><CloseX /></span>
              </button>
            </div>
          </section>
        </main>

        <footer className="flex h-[34px] shrink-0 items-center pl-[2px]">
          <span className="flex-1">Valid, Internal name: Pipes</span>
          <button type="button" className="flex items-center gap-[2px]">
            <Svg size="size-[14px]" box="0 0 14 14">
              <rect x="1" y="1" width="12" height="12" rx="2" stroke="#2e3436" strokeWidth="1.500" />
              <path d="M1 9h12M7 9v4" stroke="#2e3436" strokeWidth="1.400" />
            </Svg>
            Touchpad
            <Svg size="ml-2 h-[3px] w-[6px]" box="0 0 6 3"><path d="M0 0h6L3 3z" fill="#555" /></Svg>
          </button>
          <span className="ml-[10px]">2136.61 mm x 2296.85 mm</span>
          <svg viewBox="0 0 12 12" className="ml-3 size-3 self-end" aria-hidden="true">
            <path d="M9.500 0v12M6.500 4.500V12M3.500 7.500V12M.5 10.500V12" stroke="#b5b5b5" strokeDasharray="1 2" />
          </svg>
        </footer>
      </div>
    </div>
  );
}
